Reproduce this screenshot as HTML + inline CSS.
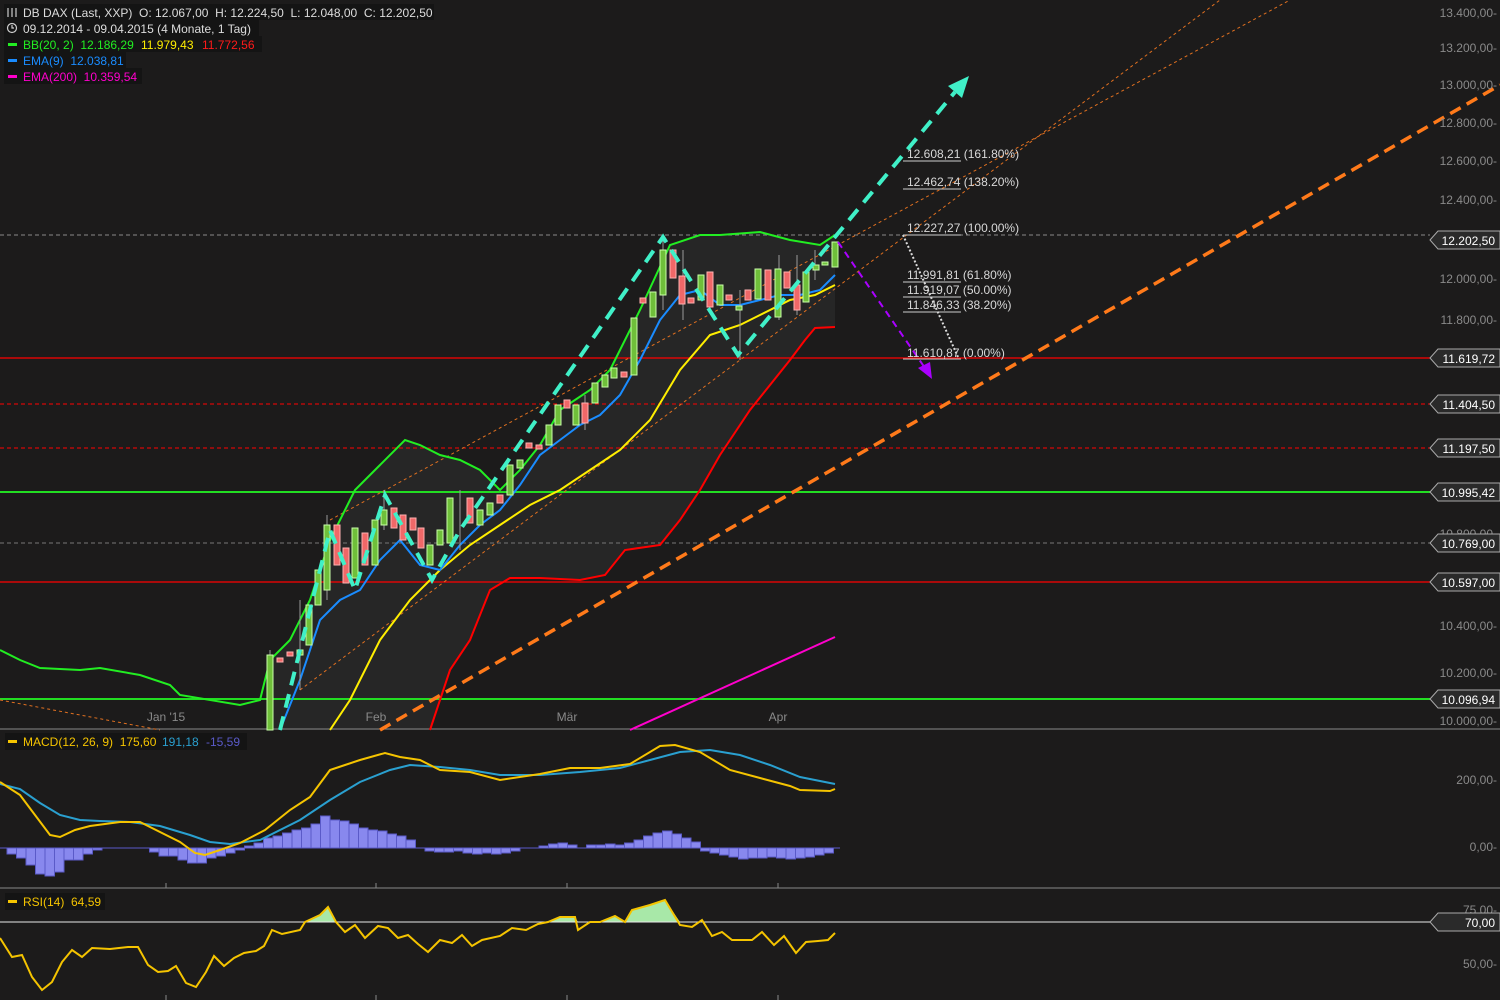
<!DOCTYPE html>
<html><head><meta charset="utf-8"><style>
html,body{margin:0;padding:0;background:#1c1b1b;}
svg{display:block;font-family:"Liberation Sans",sans-serif;}
svg text{white-space:pre;}
.ax{fill:#8a8a8a;font-size:12px;}
.fib{fill:#d8d8d8;font-size:12px;}
</style></head><body>
<svg width="1500" height="1000" viewBox="0 0 1500 1000" xmlns="http://www.w3.org/2000/svg">
<rect width="1500" height="1000" fill="#1c1b1b"/>
<polygon fill="#262626" points="270,660 290,640 310,600 330,540 355,490 380,465 405,440 420,445 440,455 460,460 480,470 500,490 520,470 540,445 560,410 590,390 610,370 640,310 670,245 700,235 720,235 760,232 790,240 820,245 835,235 835,327 815,328 805,340 790,360 770,385 750,410 730,440 720,455 700,490 680,520 660,545 625,550 605,575 580,580 540,578 510,578 490,590 470,640 450,670 430,730 270,730"/>
<line x1="0" y1="235" x2="1430" y2="235" stroke="#8a8a8a" stroke-dasharray="4,3"/>
<line x1="0" y1="358" x2="1430" y2="358" stroke="#ff0000" stroke-width="1.2"/>
<line x1="0" y1="404" x2="1430" y2="404" stroke="#ff0000" stroke-dasharray="4,3"/>
<line x1="0" y1="448" x2="1430" y2="448" stroke="#ff0000" stroke-dasharray="4,3"/>
<line x1="0" y1="492" x2="1430" y2="492" stroke="#22dd22" stroke-width="2"/>
<line x1="0" y1="543" x2="1430" y2="543" stroke="#777" stroke-dasharray="4,3"/>
<line x1="0" y1="582" x2="1430" y2="582" stroke="#ff0000" stroke-width="1.2"/>
<line x1="0" y1="699" x2="1430" y2="699" stroke="#22dd22" stroke-width="2"/>
<line x1="0" y1="729" x2="1500" y2="729" stroke="#888"/>
<line x1="0" y1="888" x2="1500" y2="888" stroke="#888"/>
<line x1="0" y1="700" x2="160" y2="730" stroke="#e07020" stroke-dasharray="3,3"/>
<line x1="300" y1="690" x2="1220" y2="0" stroke="#e07020" stroke-dasharray="3,3"/>
<line x1="330" y1="520" x2="1290" y2="0" stroke="#e07020" stroke-dasharray="3,3"/>
<polyline fill="none" stroke="#22ee22" stroke-width="2" points="0,650 20,660 40,668 80,670 100,668 140,675 170,685 180,695 240,705 260,700 270,660 290,640 310,600 330,540 355,490 380,465 405,440 420,445 440,455 460,460 480,470 500,490 520,470 540,445 560,410 590,390 610,370 640,310 670,245 700,235 720,235 760,232 790,240 820,245 835,235"/>
<polyline fill="none" stroke="#ff0000" stroke-width="2" points="430,730 450,670 470,640 490,590 510,578 540,578 580,580 605,575 625,550 660,545 680,520 700,490 720,455 730,440 750,410 770,385 790,360 805,340 815,328 835,327"/>
<polyline fill="none" stroke="#ffee00" stroke-width="2" points="330,730 350,700 380,640 410,600 440,570 470,545 500,525 530,505 560,490 590,470 620,450 650,420 680,370 710,335 740,325 760,315 790,300 815,295 835,285"/>
<polyline fill="none" stroke="#1a8cff" stroke-width="2" points="280,730 300,680 320,620 340,600 360,590 380,560 400,540 420,565 440,570 460,545 480,525 500,510 520,485 540,455 560,440 580,425 600,415 620,395 640,360 660,320 680,295 700,290 720,305 740,305 760,300 780,295 800,295 820,290 835,275"/>
<line x1="630" y1="730" x2="835" y2="637" stroke="#ff00cc" stroke-width="2"/>
<g stroke-width="1">
<g stroke="#999"><line x1="270" y1="650" x2="270" y2="730"/><line x1="300" y1="600" x2="300" y2="690"/><line x1="327" y1="515" x2="327" y2="600"/><line x1="384" y1="490" x2="384" y2="530"/><line x1="460" y1="490" x2="460" y2="550"/><line x1="585" y1="395" x2="585" y2="430"/><line x1="663" y1="235" x2="663" y2="310"/><line x1="683" y1="250" x2="683" y2="320"/><line x1="740" y1="290" x2="740" y2="360"/><line x1="779" y1="255" x2="779" y2="320"/><line x1="797" y1="255" x2="797" y2="315"/><line x1="815" y1="250" x2="815" y2="280"/></g>
<g fill="#6fbf3a" stroke="#c8ffa8">
<rect x="267" y="655" width="6" height="75"/><rect x="297" y="650" width="6" height="5"/><rect x="306" y="605" width="6" height="40"/><rect x="315" y="570" width="6" height="35"/><rect x="324" y="525" width="6" height="65"/><rect x="352" y="528" width="6" height="50"/><rect x="372" y="520" width="6" height="45"/><rect x="381" y="510" width="6" height="15"/><rect x="427" y="545" width="6" height="20"/><rect x="437" y="530" width="6" height="15"/><rect x="447" y="498" width="6" height="45"/><rect x="477" y="510" width="6" height="15"/><rect x="487" y="503" width="6" height="12"/><rect x="507" y="465" width="6" height="30"/><rect x="517" y="460" width="6" height="8"/><rect x="546" y="425" width="6" height="20"/><rect x="555" y="405" width="6" height="20"/><rect x="573" y="405" width="6" height="20"/><rect x="592" y="383" width="6" height="20"/><rect x="602" y="375" width="6" height="12"/><rect x="611" y="368" width="6" height="10"/><rect x="631" y="318" width="6" height="57"/><rect x="650" y="292" width="6" height="25"/><rect x="660" y="250" width="6" height="45"/><rect x="698" y="275" width="6" height="25"/><rect x="717" y="285" width="6" height="20"/><rect x="736" y="306" width="6" height="4"/><rect x="755" y="269" width="6" height="30"/><rect x="775" y="269" width="6" height="48"/><rect x="803" y="272" width="6" height="30"/><rect x="813" y="265" width="6" height="5"/><rect x="822" y="262" width="6" height="3"/><rect x="832" y="242" width="6" height="25"/>
</g>
<g fill="#f06868" stroke="#ffb0b0">
<rect x="277" y="658" width="6" height="4"/><rect x="287" y="652" width="6" height="4"/><rect x="334" y="525" width="6" height="40"/><rect x="343" y="548" width="6" height="35"/><rect x="362" y="533" width="6" height="32"/><rect x="391" y="508" width="6" height="20"/><rect x="400" y="515" width="6" height="25"/><rect x="410" y="518" width="6" height="12"/><rect x="418" y="528" width="6" height="20"/><rect x="467" y="498" width="6" height="25"/><rect x="497" y="495" width="6" height="8"/><rect x="526" y="443" width="6" height="5"/><rect x="536" y="445" width="6" height="4"/><rect x="564" y="400" width="6" height="8"/><rect x="582" y="403" width="6" height="20"/><rect x="621" y="372" width="6" height="5"/><rect x="640" y="298" width="6" height="5"/><rect x="670" y="250" width="6" height="28"/><rect x="679" y="276" width="6" height="28"/><rect x="688" y="298" width="6" height="5"/><rect x="707" y="272" width="6" height="35"/><rect x="726" y="295" width="6" height="5"/><rect x="745" y="290" width="6" height="10"/><rect x="765" y="270" width="6" height="30"/><rect x="784" y="272" width="6" height="16"/><rect x="794" y="285" width="6" height="25"/>
</g>
</g>
<line x1="380" y1="730" x2="1500" y2="85" stroke="#ff7a1a" stroke-width="3.5" stroke-dasharray="12,7"/>
<polyline fill="none" stroke="#40f0c8" stroke-width="4" stroke-dasharray="14,9" points="280,730 330,530 355,590 385,495 432,580 460,530 663,237 738,355 835,237 955,92"/>
<polygon fill="#40f0c8" points="969,76 948,86 962,98"/>
<line x1="838" y1="242" x2="925" y2="368" stroke="#aa00ff" stroke-width="2" stroke-dasharray="7,5"/>
<polygon fill="#aa00ff" points="932,379 918,368 930,362"/>
<polyline fill="none" stroke="#ddd" stroke-width="2" stroke-dasharray="2,2" points="903,235 958,357"/>
<g stroke="#ccc"><line x1="903" y1="161" x2="961" y2="161"/><line x1="903" y1="189" x2="961" y2="189"/><line x1="903" y1="235" x2="961" y2="235"/><line x1="903" y1="282" x2="961" y2="282"/><line x1="903" y1="297" x2="961" y2="297"/><line x1="903" y1="312" x2="961" y2="312"/><line x1="903" y1="359" x2="961" y2="359"/></g>
<g class="fib"><text x="907" y="158">12.608,21 (161.80%)</text><text x="907" y="186">12.462,74 (138.20%)</text><text x="907" y="232">12.227,27 (100.00%)</text><text x="907" y="279">11.991,81 (61.80%)</text><text x="907" y="294">11.919,07 (50.00%)</text><text x="907" y="309">11.846,33 (38.20%)</text><text x="907" y="357">11.610,87 (0.00%)</text></g>
<g class="ax" text-anchor="middle"><text x="166" y="721">Jan '15</text><text x="376" y="721">Feb</text><text x="567" y="721">Mär</text><text x="778" y="721">Apr</text></g>
<g stroke="#888"><line x1="166" y1="883" x2="166" y2="888"/><line x1="376" y1="883" x2="376" y2="888"/><line x1="567" y1="883" x2="567" y2="888"/><line x1="778" y1="883" x2="778" y2="888"/><line x1="166" y1="995" x2="166" y2="1000"/><line x1="376" y1="995" x2="376" y2="1000"/><line x1="567" y1="995" x2="567" y2="1000"/><line x1="778" y1="995" x2="778" y2="1000"/></g>
<g class="ax" text-anchor="end"><text x="1497" y="17">13.400,00-</text><text x="1497" y="52">13.200,00-</text><text x="1497" y="89">13.000,00-</text><text x="1497" y="127">12.800,00-</text><text x="1497" y="165">12.600,00-</text><text x="1497" y="204">12.400,00-</text><text x="1497" y="283">12.000,00-</text><text x="1497" y="324">11.800,00-</text><text x="1497" y="538">10.800,00-</text><text x="1497" y="630">10.400,00-</text><text x="1497" y="677">10.200,00-</text><text x="1497" y="725">10.000,00-</text><text x="1497" y="784">200,00-</text><text x="1497" y="851">0,00-</text><text x="1497" y="914">75,00-</text><text x="1497" y="968">50,00-</text></g>
<g font-size="12" fill="#fff" text-anchor="end">
<path d="M1430,240 L1438,231 L1500,231 L1500,249 L1438,249 Z" fill="#2a2a2a" stroke="#aaa"/><text x="1495" y="245">12.202,50</text>
<path d="M1430,358 L1438,349 L1500,349 L1500,367 L1438,367 Z" fill="#2a2a2a" stroke="#aaa"/><text x="1495" y="363">11.619,72</text>
<path d="M1430,404 L1438,395 L1500,395 L1500,413 L1438,413 Z" fill="#2a2a2a" stroke="#aaa"/><text x="1495" y="409">11.404,50</text>
<path d="M1430,448 L1438,439 L1500,439 L1500,457 L1438,457 Z" fill="#2a2a2a" stroke="#aaa"/><text x="1495" y="453">11.197,50</text>
<path d="M1430,492 L1438,483 L1500,483 L1500,501 L1438,501 Z" fill="#2a2a2a" stroke="#aaa"/><text x="1495" y="497">10.995,42</text>
<path d="M1430,543 L1438,534 L1500,534 L1500,552 L1438,552 Z" fill="#2a2a2a" stroke="#aaa"/><text x="1495" y="548">10.769,00</text>
<path d="M1430,582 L1438,573 L1500,573 L1500,591 L1438,591 Z" fill="#2a2a2a" stroke="#aaa"/><text x="1495" y="587">10.597,00</text>
<path d="M1430,699 L1438,690 L1500,690 L1500,708 L1438,708 Z" fill="#2a2a2a" stroke="#aaa"/><text x="1495" y="704">10.096,94</text>
<path d="M1430,922 L1438,913 L1500,913 L1500,931 L1438,931 Z" fill="#2a2a2a" stroke="#aaa"/><text x="1495" y="927">70,00</text>
</g>
<g fill="#8888ee" stroke="#5a5ac8">
<rect x="7" y="848" width="9.5" height="6"/><rect x="16.5" y="848" width="9.5" height="10"/><rect x="26" y="848" width="9.5" height="17"/><rect x="35.5" y="848" width="9.5" height="26"/><rect x="45" y="848" width="9.5" height="28"/><rect x="54.5" y="848" width="9.5" height="24"/><rect x="64" y="848" width="9.5" height="12"/><rect x="73.5" y="848" width="9.5" height="12"/><rect x="83" y="848" width="9.5" height="6"/><rect x="92.5" y="848" width="9.5" height="2"/>
<rect x="149.5" y="848" width="9.5" height="4"/><rect x="159" y="848" width="9.5" height="8"/><rect x="168.5" y="848" width="9.5" height="8"/><rect x="178" y="848" width="9.5" height="12"/><rect x="187.5" y="848" width="9.5" height="15"/><rect x="197" y="848" width="9.5" height="15"/><rect x="206.5" y="848" width="9.5" height="10"/><rect x="216" y="848" width="9.5" height="8"/><rect x="225.5" y="848" width="9.5" height="5"/><rect x="235" y="848" width="9.5" height="2"/>
<rect x="244.5" y="846" width="9.5" height="2"/><rect x="254" y="843" width="9.5" height="5"/><rect x="263.5" y="838" width="9.5" height="10"/><rect x="273" y="836" width="9.5" height="12"/><rect x="282.5" y="833" width="9.5" height="15"/><rect x="292" y="830" width="9.5" height="18"/><rect x="301.5" y="828" width="9.5" height="20"/><rect x="311" y="824" width="9.5" height="24"/><rect x="320.5" y="816" width="9.5" height="32"/><rect x="330" y="820" width="9.5" height="28"/>
<rect x="339.5" y="821" width="9.5" height="27"/><rect x="349" y="824" width="9.5" height="24"/><rect x="358.5" y="828" width="9.5" height="20"/><rect x="368" y="830" width="9.5" height="18"/><rect x="377.5" y="831" width="9.5" height="17"/><rect x="387" y="834" width="9.5" height="14"/><rect x="396.5" y="836" width="9.5" height="12"/><rect x="406" y="840" width="9.5" height="8"/>
<rect x="425" y="848" width="9.5" height="3"/><rect x="434.5" y="848" width="9.5" height="4"/><rect x="444" y="848" width="9.5" height="4"/><rect x="453.5" y="848" width="9.5" height="3"/><rect x="463" y="848" width="9.5" height="5"/><rect x="472.5" y="848" width="9.5" height="6"/><rect x="482" y="848" width="9.5" height="5"/><rect x="491.5" y="848" width="9.5" height="6"/><rect x="501" y="848" width="9.5" height="5"/><rect x="510.5" y="848" width="9.5" height="3"/>
<rect x="539" y="846" width="9.5" height="2"/><rect x="548.5" y="844" width="9.5" height="4"/><rect x="558" y="843" width="9.5" height="5"/><rect x="567.5" y="845" width="9.5" height="3"/><rect x="586.5" y="845" width="9.5" height="3"/><rect x="596" y="845" width="9.5" height="3"/><rect x="605.5" y="844" width="9.5" height="4"/><rect x="615" y="845" width="9.5" height="3"/><rect x="624.5" y="843" width="9.5" height="5"/>
<rect x="634" y="840" width="9.5" height="8"/><rect x="643.5" y="836" width="9.5" height="12"/><rect x="653" y="833" width="9.5" height="15"/><rect x="662.5" y="831" width="9.5" height="17"/><rect x="672" y="834" width="9.5" height="14"/><rect x="681.5" y="838" width="9.5" height="10"/><rect x="691" y="842" width="9.5" height="6"/>
<rect x="700.5" y="848" width="9.5" height="3"/><rect x="710" y="848" width="9.5" height="5"/><rect x="719.5" y="848" width="9.5" height="7"/><rect x="729" y="848" width="9.5" height="9"/><rect x="738.5" y="848" width="9.5" height="11"/><rect x="748" y="848" width="9.5" height="10"/><rect x="757.5" y="848" width="9.5" height="10"/><rect x="767" y="848" width="9.5" height="9"/><rect x="776.5" y="848" width="9.5" height="10"/><rect x="786" y="848" width="9.5" height="11"/><rect x="795.5" y="848" width="9.5" height="10"/><rect x="805" y="848" width="9.5" height="9"/><rect x="814.5" y="848" width="9.5" height="7"/><rect x="824" y="848" width="9.5" height="5"/>
</g>
<line x1="0" y1="848" x2="840" y2="848" stroke="#5a5ac8"/>
<polyline fill="none" stroke="#2aa0d0" stroke-width="2" points="0,784 20,789 40,803 60,815 80,820 100,821 130,822 160,826 190,835 210,842 230,844 260,840 300,820 330,800 360,782 390,770 410,765 440,767 470,770 500,775 540,775 580,772 620,768 650,760 680,752 710,750 740,755 770,765 800,777 835,784"/>
<polyline fill="none" stroke="#f5c400" stroke-width="2" points="0,782 20,795 35,815 50,835 60,837 75,830 90,826 120,822 140,822 160,832 180,842 195,853 205,855 220,850 240,843 265,830 290,810 310,797 330,770 345,765 360,760 385,753 400,757 420,760 440,770 470,772 500,780 540,774 570,768 600,768 630,764 660,746 675,745 700,752 730,770 760,778 790,786 800,790 830,791 835,789"/>
<g font-size="12"><rect x="5" y="733" width="242" height="17" fill="#141414"/><rect x="8" y="740" width="9" height="3" fill="#f5c400"/><text x="23" y="746" fill="#f5c400">MACD(12, 26, 9)  175,60</text><text x="162" y="746" fill="#2aa0d0">191,18</text><text x="206" y="746" fill="#5a5ac8">-15,59</text></g>
<polygon fill="#a8e8a8" points="305,922 320,915 328,907 336,922"/>
<polygon fill="#a8e8a8" points="548,922 560,917 575,917 578,922"/>
<polygon fill="#a8e8a8" points="600,922 615,916 625,922 632,910 650,905 665,900 680,922"/>
<line x1="0" y1="922" x2="1430" y2="922" stroke="#e8e8e8"/>
<polyline fill="none" stroke="#f5c400" stroke-width="2" points="0,938 12,957 22,955 32,977 42,990 52,982 62,962 72,950 82,957 92,948 110,949 128,947 138,947 148,965 158,972 168,971 176,966 186,983 196,987 206,972 214,956 224,966 234,958 244,953 256,951 264,946 272,930 282,934 300,930 305,922 320,915 328,907 336,922 345,932 355,925 365,938 378,926 388,928 398,938 408,935 418,944 428,952 440,940 452,943 462,935 472,946 482,940 500,936 512,928 526,930 538,924 548,922 560,917 575,917 578,930 590,922 600,922 615,916 625,922 632,910 650,905 665,900 680,925 692,927 702,920 712,936 722,932 732,940 752,940 762,932 774,945 784,936 796,953 806,942 818,941 828,940 835,933"/>
<g font-size="12"><rect x="5" y="893" width="100" height="17" fill="#141414"/><rect x="8" y="900" width="9" height="3" fill="#f5c400"/><text x="23" y="906" fill="#f5c400">RSI(14)  64,59</text></g>
<g font-size="12">
<rect x="4" y="4" width="430" height="16" fill="#141414"/><rect x="4" y="20" width="255" height="16" fill="#141414"/><rect x="4" y="36" width="258" height="16" fill="#141414"/><rect x="4" y="52" width="122" height="16" fill="#141414"/><rect x="4" y="68" width="138" height="16" fill="#141414"/>
<g stroke="#ccc" stroke-width="1.2" fill="none"><line x1="8" y1="8" x2="8" y2="17"/><line x1="12" y1="8" x2="12" y2="17"/><line x1="16" y1="8" x2="16" y2="17"/><circle cx="12" cy="28" r="4.5"/><path d="M12,25 V28 H14"/></g>
<text x="23" y="17" fill="#ddd">DB DAX (Last, XXP)  O: 12.067,00  H: 12.224,50  L: 12.048,00  C: 12.202,50</text>
<text x="23" y="33" fill="#ddd">09.12.2014 - 09.04.2015 (4 Monate, 1 Tag)</text>
<rect x="8" y="43" width="9" height="3" fill="#22ee22"/><text x="23" y="49" fill="#22ee22">BB(20, 2)  12.186,29</text><text x="141" y="49" fill="#ffee00">11.979,43</text><text x="202" y="49" fill="#ff1a1a">11.772,56</text>
<rect x="8" y="59" width="9" height="3" fill="#1a8cff"/><text x="23" y="65" fill="#1a8cff">EMA(9)  12.038,81</text>
<rect x="8" y="75" width="9" height="3" fill="#ff00cc"/><text x="23" y="81" fill="#ff00cc">EMA(200)  10.359,54</text>
</g>
</svg>
</body></html>
